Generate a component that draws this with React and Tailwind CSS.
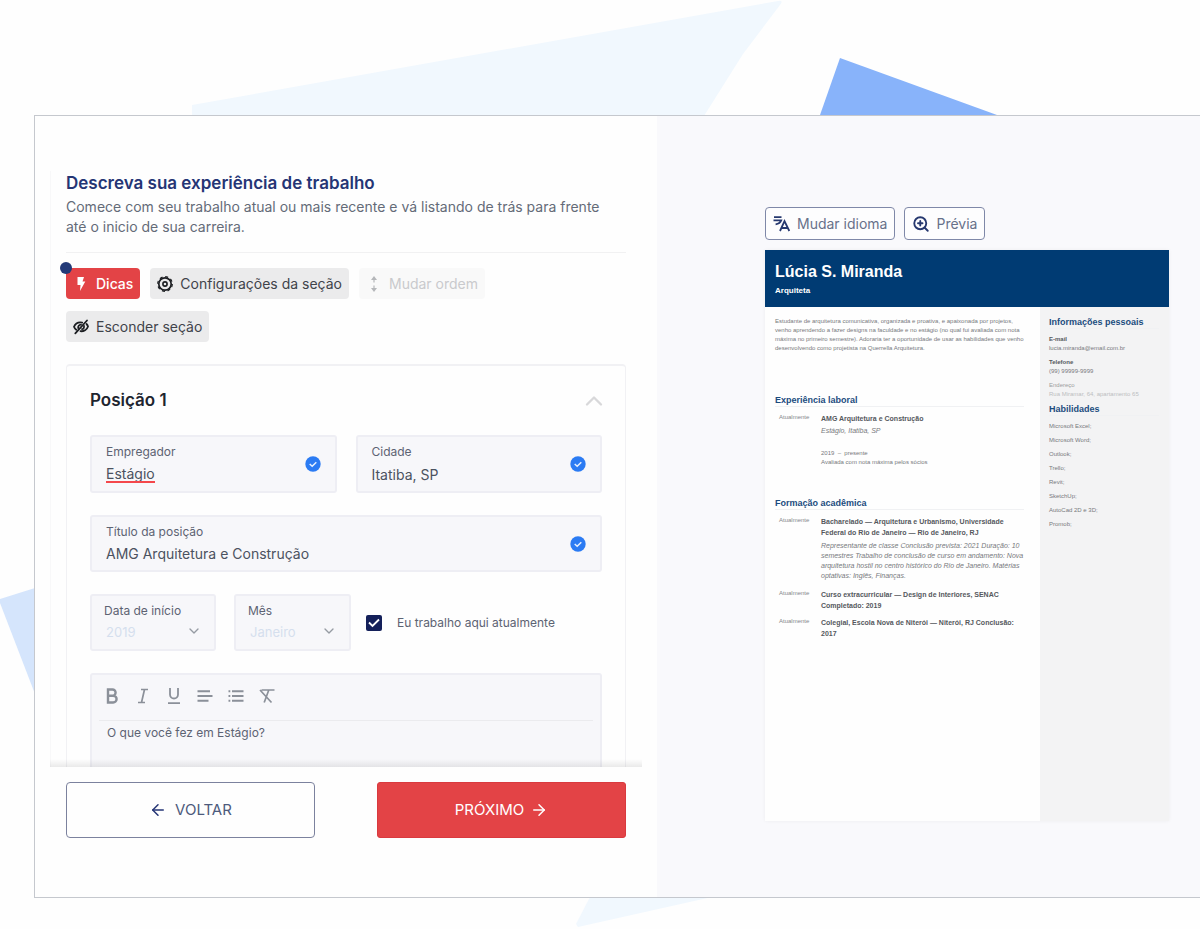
import React from "react";
import { ArrowLeft, ArrowRight, ChevronDown, ChevronUp, ZoomIn } from "lucide-react";

function Backdrop() {
  return (
    <svg
      className="absolute left-0 top-0 h-[929px] w-[1200px]"
      viewBox="0 0 1200 929"
      aria-hidden="true"
    >
      <path d="M192 105 778 1Q784 0 780 5L743 54 704 116H192Z" fill="#f1f8fe" />
      <path d="M840 58 997 115H820Z" fill="#88b3fa" />
      <path d="M0 599 35 588V694L0 603Z" fill="#d5e5fc" />
      <path d="M590 897H712L578 927 576 924Z" fill="#f1f8fe" />
    </svg>
  );
}

function BoltIcon() {
  return (
    <svg viewBox="0 0 16 16" className="size-4" fill="currentColor" aria-hidden="true">
      <path d="M4.500 1H11L9.500 5.500H12.300L7 15l.5-6H4.500Z" />
    </svg>
  );
}

function GearIcon() {
  return (
    <svg viewBox="0 0 16 16" className="size-4" fill="none" stroke="currentColor" aria-hidden="true">
      <circle cx="8" cy="8" r="6.200" strokeWidth="1.700" />
      <circle cx="8" cy="8" r="7.300" strokeWidth="1.200" strokeDasharray="3 2.733" />
      <circle cx="8" cy="8" r="2.100" strokeWidth="1.600" />
    </svg>
  );
}

function SortIcon() {
  return (
    <svg viewBox="0 0 16 16" className="size-4" fill="currentColor" aria-hidden="true">
      <path d="M8 0 11 4H8.600V6.500H7.400V4H5ZM7.400 9.500H8.600V12H11L8 16 5 12h2.400Z" />
    </svg>
  );
}

function HiddenIcon() {
  return (
    <svg
      viewBox="0 0 16 16"
      className="size-4"
      fill="none"
      stroke="currentColor"
      strokeWidth="1.800"
      strokeLinecap="round"
      aria-hidden="true"
    >
      <path d="M9.200 3.600C5.500 3 2.200 4.800 1 7.800c.5 1.300 1.300 2.300 2.300 3" />
      <path d="M13.500 5c.7.700 1.200 1.500 1.500 2.500-1 3.200-4.300 5-7.500 4.700" />
      <path d="M8 5.600C5.900 5.700 4.900 7.300 5.200 9.200M11 7c.3 1.800-.6 3-2 3.200" />
      <path d="M14 1.500 2.300 14.300" />
    </svg>
  );
}

function TranslateIcon() {
  return (
    <svg
      viewBox="0 0 18 18"
      className="size-[18px]"
      fill="none"
      stroke="currentColor"
      strokeWidth="1.800"
      aria-hidden="true"
    >
      <path d="M1 2.200H8.500M.5 5.300H8.300C7.500 7.500 5.200 9 2.600 9.400" />
      <path d="M7 16 11.500 6.200 16.300 16M8.800 13h6" />
    </svg>
  );
}

function CheckBadge() {
  return (
    <svg viewBox="0 0 16 16" className="size-4 shrink-0" aria-hidden="true">
      <circle cx="8" cy="8" r="7.700" fill="#2b7bf3" />
      <path d="M4.700 8 7.200 10.300 11.300 6.200" fill="none" stroke="#e6f0ff" strokeWidth="1.500" />
    </svg>
  );
}

const fieldBox = "flex items-center rounded-[3px] border-2 border-[#eeeef4] bg-[#f7f7fa]";

function TextField({ id, label, value, misspelled, className }) {
  return (
    <div className={`${fieldBox} pl-[14px] pr-3.5 ${className}`}>
      <div className="min-w-0 flex-1">
        <label htmlFor={id} className="block text-xs leading-5 text-[#5d6373]">
          {label}
        </label>
        <div className="flex h-6 items-center">
          <input
            id={id}
            type="text"
            defaultValue={value}
            spellCheck={false}
            className={
              misspelled
                ? "field-sizing-content h-[18px] border-b-2 border-[#f4474b] bg-transparent text-sm leading-4 text-[#4b5260] outline-none"
                : "h-full w-full bg-transparent text-sm text-[#4b5260] outline-none"
            }
          />
        </div>
      </div>
      <CheckBadge />
    </div>
  );
}

function SelectField({ id, label, value, className }) {
  return (
    <div className={`${fieldBox} relative h-[57px] pl-3 ${className}`}>
      <div className="min-w-0 flex-1">
        <label htmlFor={id} className="block text-xs leading-5 text-[#5d6373]">
          {label}
        </label>
        <select
          id={id}
          defaultValue={value}
          className="block h-6 w-full appearance-none bg-transparent pl-0.5 text-[13px] text-[#d5dfee] outline-none"
        >
          <option>{value}</option>
        </select>
      </div>
      <ChevronDown className="pointer-events-none absolute bottom-2.5 right-3 size-4 text-[#969ba3]" aria-hidden="true" />
    </div>
  );
}

const tools = [
  ["Negrito", "M5 2.500H9.500A3 3 0 0 1 9.500 8.700H5ZM5 8.700H10.200A3.300 3.300 0 0 1 10.200 15.500H5Z", 2.4],
  ["Itálico", "M7 2.500H14M4 15.500H11M10.500 2.500 7.500 15.500", 1.7],
  ["Sublinhado", "M5 1V7.500A4 4 0 0 0 13 7.500V1M3 16.200H15", 1.8],
  ["Alinhar à esquerda", "M1.500 4.200H14M1.500 9H16.500M1.500 13.800H12.500", 2],
  ["Lista", "M5 4.200H16.500M5 9H16.500M5 13.800H16.500M1.500 4.200H3.300M1.500 9H3.300M1.500 13.800H3.300", 2],
  ["Limpar formatação", "M3.500 3H16.500M10.800 3 6.200 15.500M2 3 13.500 15.500", 1.7],
];

function FormPane() {
  const chip = "flex h-[31px] items-center gap-[7px] rounded px-[7px]";
  return (
    <section className="flex flex-col bg-[#fefefe] px-[15px]">
      <div className="mt-[55px] h-[596px] overflow-hidden border-l border-[#f8f8f9] pl-[15px] pr-4">
        <h1 className="text-[17px] font-semibold leading-6 text-[#253575]">
          Descreva sua experiência de trabalho
        </h1>
        <p className="mt-0.5 whitespace-nowrap text-sm leading-5 text-[#646b78]">
          Comece com seu trabalho atual ou mais recente e vá listando de trás para frente
          <br />
          até o inicio de sua carreira.
        </p>
        <hr className="mt-[15px] border-[#f1f1f2]" />

        <div className="mt-[15px] flex flex-wrap gap-x-2.5 gap-y-3 text-sm">
          <button className={`relative bg-[#e34346] font-medium text-white ${chip}`}>
            <span className="absolute -left-1.5 -top-1.5 size-3 rounded-full bg-[#233a78]" />
            <BoltIcon />
            Dicas
          </button>
          <button className={`bg-[#ebebec] text-[#3f434a] ${chip}`}>
            <span className="text-[#1c1e22]">
              <GearIcon />
            </span>
            Configurações da seção
          </button>
          <button className={`bg-[#f9f9f9] text-[#c9cacd] ${chip}`}>
            <span className="text-[#b5b7ba]">
              <SortIcon />
            </span>
            Mudar ordem
          </button>
          <button className={`bg-[#ebebec] text-[#3f434a] ${chip}`}>
            <span className="text-[#1c1e22]">
              <HiddenIcon />
            </span>
            Esconder seção
          </button>
        </div>

        <div className="mt-[22px] rounded-t border-x border-t-2 border-[#f1f1f4] px-[23px]">
          <div className="flex h-[69px] items-center justify-between">
            <h2 className="text-[17px] font-semibold text-[#1e2530]">Posição 1</h2>
            <button aria-label="Recolher posição" className="-mr-1.5">
              <ChevronUp className="size-7 text-[#d8d8da]" strokeWidth={2} />
            </button>
          </div>

          <div className="grid grid-cols-2 gap-[19px]">
            <TextField id="empregador" label="Empregador" value="Estágio" misspelled className="h-[58px]" />
            <TextField id="cidade" label="Cidade" value="Itatiba, SP" className="h-[58px]" />
          </div>
          <div className="mt-[22px]">
            <TextField id="titulo" label="Título da posição" value="AMG Arquitetura e Construção" className="h-[57px]" />
          </div>
          <div className="mt-[22px] flex items-center">
            <SelectField id="ano" label="Data de início" value="2019" className="w-[126px]" />
            <SelectField id="mes" label="Mês" value="Janeiro" className="ml-[18px] w-[117px]" />
            <label className="ml-[15px] flex items-center gap-[15px] text-xs text-[#5d6373]">
              <span className="grid">
                <input
                  type="checkbox"
                  defaultChecked
                  className="col-start-1 row-start-1 size-4 appearance-none rounded-[2px] bg-[#14205a]"
                />
                <svg viewBox="0 0 16 16" className="pointer-events-none col-start-1 row-start-1 size-4" aria-hidden="true">
                  <path d="M3 7.500 6.500 11 13 4.500" fill="none" stroke="#fff" strokeWidth="1.800" />
                </svg>
              </span>
              Eu trabalho aqui atualmente
            </label>
          </div>

          <div className="mt-[22px] rounded-t-[3px] border-2 border-[#eeeef4] bg-[#f7f7fa] px-[7px]">
            <div className="flex h-[46px] items-center gap-[13px] border-b border-[#ebebee] px-1 pb-[3px]">
              {tools.map(([name, path, weight]) => (
                <button key={name} aria-label={name} className="text-[#8b9099]">
                  <svg viewBox="0 0 18 18" className="size-[18px]" fill="none" stroke="currentColor" strokeWidth={weight} aria-hidden="true">
                    <path d={path} />
                  </svg>
                </button>
              ))}
            </div>
            <textarea
              aria-label="Descrição"
              defaultValue="O que você fez em Estágio?"
              className="block h-24 w-full resize-none bg-transparent px-2 pt-0.5 text-xs leading-5 text-[#5d6373] outline-none"
            />
          </div>
        </div>
      </div>

      <div className="relative h-[130px] bg-[#fefefe] px-4 pt-[15px]">
        <div className="pointer-events-none absolute inset-x-0 bottom-full h-2 bg-linear-to-t from-black/8 to-transparent" />
        <div className="grid grid-cols-2 gap-[62px]">
          <button className="flex h-14 items-center justify-center gap-2 rounded border border-[#7c829e] text-[15px] text-[#4d5a7c]">
            <ArrowLeft className="size-[18px] text-[#253575]" />
            VOLTAR
          </button>
          <button className="flex h-14 items-center justify-center gap-1.5 rounded-[3px] border border-[#d93a3f] bg-[#e34346] text-[15px] text-white">
            PRÓXIMO
            <ArrowRight className="size-[18px]" />
          </button>
        </div>
      </div>
    </section>
  );
}

const resumeHeading = "border-b border-[#f0f1f3] text-[9px] font-bold leading-3 text-[#1c4c7e]";

function Entry({ title, children, className }) {
  return (
    <div className={`flex ${className}`}>
      <span className="w-[46px] shrink-0 pl-1 text-[6px] leading-[9px] text-[#85888c]">Atualmente</span>
      <div className="flex-1 whitespace-nowrap">
        <h4 className="text-[7px] font-bold leading-[11px] text-[#55585d]">{title}</h4>
        {children}
      </div>
    </div>
  );
}

const skills = [
  "Microsoft Excel;",
  "Microsoft Word;",
  "Outlook;",
  "Trello;",
  "Revit;",
  "SketchUp;",
  "AutoCad 2D e 3D;",
  "Promob;",
];

function Resume() {
  return (
    <article className="mt-2.5 bg-[#fefefe] font-['Liberation_Sans',sans-serif] shadow-[0_0_4px_rgba(0,0,0,0.05)]">
      <header className="h-[57px] bg-[#003b73] pl-2.5 pt-3 text-white">
        <h2 className="text-base font-bold leading-5">Lúcia S. Miranda</h2>
        <p className="mt-[3px] text-[8px] font-bold leading-3">Arquiteta</p>
      </header>
      <div className="grid min-h-[514px] grid-cols-[275fr_129fr]">
        <div className="pl-2.5 pt-2.5">
          <p className="whitespace-nowrap text-[6px] leading-[9px] text-[#77797d]">
            Estudante de arquitetura comunicativa, organizada e proativa, e apaixonada por projetos,
            <br />
            venho aprendendo a fazer designs na faculdade e no estágio (no qual fui avaliada com nota
            <br />
            máxima no primeiro semestre). Adoraria ter a oportunidade de usar as habilidades que venho
            <br />
            desenvolvendo como projetista na Querrella Arquitetura.
          </p>
          <div className="mt-[41px] pr-4">
            <h3 className={resumeHeading}>Experiência laboral</h3>
            <Entry title="AMG Arquitetura e Construção" className="mt-1.5">
              <p className="mt-0.5 text-[7px] italic leading-[10px] text-[#77797d]">Estágio, Itatiba, SP</p>
              <p className="mt-[13px] text-[6px] leading-[9px] text-[#77797d]">
                2019&nbsp; –&nbsp; presente
                <br />
                Avaliada com nota máxima pelos sócios
              </p>
            </Entry>
            <h3 className={`mt-[30px] ${resumeHeading}`}>Formação acadêmica</h3>
            <Entry
              className="mt-1.5"
              title={
                <>
                  Bacharelado — Arquitetura e Urbanismo, Universidade
                  <br />
                  Federal do Rio de Janeiro — Rio de Janeiro, RJ
                </>
              }
            >
              <p className="mt-[3px] text-[7px] italic leading-[10px] text-[#77797d]">
                Representante de classe Conclusão prevista: 2021 Duração: 10
                <br />
                semestres Trabalho de conclusão de curso em andamento: Nova
                <br />
                arquitetura hostil no centro histórico do Rio de Janeiro. Matérias
                <br />
                optativas: Inglês, Finanças.
              </p>
            </Entry>
            <Entry
              className="mt-2"
              title={
                <>
                  Curso extracurricular — Design de Interiores, SENAC
                  <br />
                  Completado: 2019
                </>
              }
            />
            <Entry
              className="mt-1.5"
              title={
                <>
                  Colegial, Escola Nova de Niterói — Niterói, RJ Conclusão:
                  <br />
                  2017
                </>
              }
            />
          </div>
        </div>

        <aside className="whitespace-nowrap bg-[#f3f3f4] pl-[9px] pr-2.5 pt-[9px] text-[6px] leading-[9px] text-[#77797d]">
          <h3 className={resumeHeading}>Informações pessoais</h3>
          <p className="mt-1.5 font-bold text-[#55585d]">E-mail</p>
          <p>lucia.miranda@email.com.br</p>
          <p className="mt-[5px] font-bold text-[#55585d]">Telefone</p>
          <p>(99) 99999-9999</p>
          <p className="mt-[5px] text-[#9b9da0]">Endereço</p>
          <p className="text-[#bcbec1]">Rua Miramar, 64, apartamento 65</p>
          <h3 className={`mt-1 ${resumeHeading}`}>Habilidades</h3>
          <ul className="mt-1.5 flex flex-col gap-[5px]">
            {skills.map((skill) => (
              <li key={skill}>{skill}</li>
            ))}
          </ul>
        </aside>
      </div>
    </article>
  );
}

function PreviewPane() {
  const button =
    "flex h-[33px] items-center gap-1.5 rounded border border-[#7f88a8] bg-[#fdfdfe] px-[7px] text-sm text-[#68718a]";
  return (
    <section className="bg-[#f9f9fc] pb-[75px] pl-[108px] pr-[31px] pt-[91px]">
      <div className="flex gap-[9px]">
        <button className={button}>
          <span className="text-[#26386f]">
            <TranslateIcon />
          </span>
          Mudar idioma
        </button>
        <button className={button}>
          <ZoomIn className="size-[18px] text-[#26386f]" strokeWidth={2.5} />
          Prévia
        </button>
      </div>
      <Resume />
    </section>
  );
}

export default function App() {
  return (
    <div className="relative min-h-screen overflow-hidden bg-[#fefefe] pb-8 pl-[34px] pt-[115px] font-['Inter','Open_Sans',sans-serif]">
      <Backdrop />
      <main className="relative grid grid-cols-[622fr_543fr] border-y border-l border-[#c5c8ce]">
        <FormPane />
        <PreviewPane />
      </main>
    </div>
  );
}
